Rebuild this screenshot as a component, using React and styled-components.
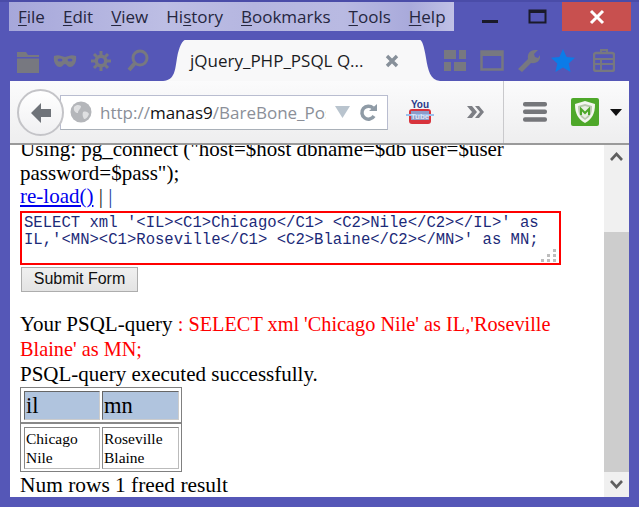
import React from "react";
import styled, { createGlobalStyle } from "styled-components";

const Global = createGlobalStyle`
  html, body { margin: 0; padding: 0; background: #5557b7; }
  body { width: 639px; height: 507px; overflow: hidden; }
`;
const Win = styled.div`
  width: 639px; height: 507px; background: #5557b7; display: flex; flex-direction: column;
  border-top: 2px solid #4a4ca8; box-sizing: border-box; overflow: hidden;
`;
const TitleBar = styled.div`
  height: 29px; display: flex; align-items: flex-start; padding-left: 9px;
`;
const MenuBar = styled.div`
  width: 445px; height: 29px; display: flex; align-items: center; padding-left: 9px; gap: 18px; box-sizing: border-box;
  background: linear-gradient(90deg, #a6a7da 0%, #bdbee4 35%, #b5b6e0 55%, #b9bae2 75%, #a9aadb 90%, #c0c1e6 100%);
  font: 17px "Open Sans", "Noto Sans", sans-serif; color: #25263f;
`;
const MenuItem = styled.span`
  white-space: nowrap;
  u { text-underline-offset: 2px; text-decoration-thickness: 1px; }
`;
const Controls = styled.div`
  margin-left: auto; margin-right: 8px; display: flex; align-items: center;
`;
const Ctl = styled.div`
  width: ${p => p.$w}px; height: 29px; display: flex; align-items: center; justify-content: center;
  background: ${p => p.$bg || "transparent"};
`;
const TabRow = styled.div`
  height: 50px; display: flex; align-items: flex-end; padding-left: 10px;
`;
const LeftIcons = styled.div`
  width: 153px; height: 41px; display: flex; align-items: center; padding: 0 0 0 6px; gap: 13px; box-sizing: border-box;
`;
const Tab = styled.div`
  height: 41px; width: 235px; background: #f8f8f9; display: flex; align-items: center; justify-content: space-between;
  padding: 0 21px 0 5px; box-sizing: border-box;
  font: 17px "Open Sans", "Noto Sans", sans-serif; color: #1b1b1f; white-space: nowrap;
`;
const Flank = styled.svg`
  display: block; flex: none;
`;
const RightIcons = styled.div`
  display: flex; align-items: center; height: 41px; gap: 14px; padding-left: 4px;
`;
const Toolbar = styled.div`
  margin-left: 10px; width: 619px; height: 64px; flex: none; position: relative; display: flex; align-items: center;
  background: linear-gradient(#fbfbfc, #eeeeef);
  border-bottom: 2px solid #9a9a9a; box-sizing: border-box;
`;
const BackBtn = styled.div`
  position: absolute; left: 7px; top: 8px; width: 47px; height: 47px; border-radius: 50%; box-sizing: border-box;
  border: 2px solid #c4c4c8; background: linear-gradient(#fff, #f0f0f2); display: flex; align-items: center; justify-content: center;
`;
const UrlBox = styled.div`
  margin-left: 50px; width: 328px; height: 35px; box-sizing: border-box; background: #fff;
  border: 1px solid #b9bdd0; border-bottom-color: #a9b0b8; display: flex; align-items: center; padding-left: 9px; gap: 8px;
`;
const UrlText = styled.div`
  width: 226px; overflow: hidden; white-space: nowrap; font: 17px "Open Sans", "Noto Sans", sans-serif; color: #8b8f98;
  b { font-weight: 400; color: #111; }
`;
const ToolIcons = styled.div`
  display: flex; align-items: center;
`;
const Divider = styled.div`
  width: 1px; height: 62px; background: #c9c9cc;
`;
const Viewport = styled.div`
  margin-left: 10px; width: 619px; flex: 1; min-height: 0; display: flex; overflow: hidden;
`;
const Page = styled.div`
  flex: 1; min-width: 0; background: #fff; padding-left: 10px; overflow: hidden;
  font: 21px/23.5px "Liberation Serif", serif; color: #000;
`;
const TopBlock = styled.div`
  margin-top: -7px; width: 520px;
`;
const Link = styled.a`
  color: #0000ee; text-decoration: underline;
`;
const Bar = styled.span`
  color: ${p => (p.$blue ? "#1f3f9f" : "#222")};
`;
const Sql = styled.div`
  margin-top: 2px; width: 541px; height: 54px; box-sizing: border-box; border: 2px solid #ff0000; padding: 2px 2px; position: relative;
  font: 15.6px/17.5px "Liberation Mono", monospace; color: #1c2a78; white-space: pre;
`;
const Grip = styled.svg`
  position: absolute; right: 0; bottom: 0;
`;
const Submit = styled.button`
  display: block; margin: 2px 0 0 1px; width: 117px; height: 25px; padding: 0; box-sizing: border-box;
  background: linear-gradient(#f0f0f0, #e3e3e3); border: 1px solid #adadad;
  font: 16px "Liberation Sans", sans-serif; color: #111;
`;
const Result = styled.div`
  margin-top: 20px; width: 560px; line-height: 25px;
`;
const Red = styled.span` color: #ff0000; font-size: 20.3px; `;
const Grid = styled.div`
  width: 162px; box-sizing: border-box; border: 1px solid #808080; margin-top: 0;
`;
const GridRow = styled.div`
  display: grid; grid-template-columns: 76px 77px; gap: 2px; padding: 3px 3px 2px;
  border-bottom: ${p => (p.$head ? "2px solid #888" : "none")};
`;
const Th = styled.div`
  height: 29px; background: #b0c4de; border: 1px solid; border-color: #666 #ccc #ccc #666; box-sizing: border-box;
  font: 22.5px/27px "Liberation Serif", serif; padding-left: 1px;
`;
const Td = styled.div`
  height: 42px; border: 1px solid; border-color: #888 #bbb #bbb #888; box-sizing: border-box;
  font: 15.5px/19px "Liberation Serif", serif; padding: 1px 0 0 1px;
`;
const Footer = styled.div`
  font-size: 21.4px; line-height: 24px; margin-top: 1px; white-space: nowrap;
`;
const ScrollBar = styled.div`
  width: 25px; flex: none; background: #f0f0f0; display: flex; flex-direction: column; align-items: stretch;
`;
const ScrollBtn = styled.div`
  height: 87px; display: flex; justify-content: center; padding-top: 7px; box-sizing: border-box;
`;
const ScrollEnd = styled.div`
  height: 25px; display: flex; justify-content: center; align-items: center;
`;
const Thumb = styled.div`
  height: 240px; background: #cdcdcd;
`;
const BottomEdge = styled.div`
  height: 10px; flex: none; background: #5557b7;
`;
const IconLabel = styled.text`
  font: bold ${p => p.$size}px "Liberation Sans", sans-serif; fill: ${p => p.$fill};
`;

const G = "#777880";
const I = ({ w = 26, h = 26, children, style }) => (
  <svg width={w} height={h} viewBox={`0 0 ${w} ${h}`} style={style}>{children}</svg>
);

const menu = [["F", "ile"], ["E", "dit"], ["V", "iew"], ["Hi", "s", "tory"], ["B", "ookmarks"], ["T", "ools"], ["H", "elp"]];

export default function App() {
  return (
    <Win>
      <Global />
      <TitleBar>
        <MenuBar>
          {menu.map((m, i) => (
            <MenuItem key={i}>
              {m.length === 3 ? <>{m[0]}<u>{m[1]}</u>{m[2]}</> : <><u>{m[0]}</u>{m[1]}</>}
            </MenuItem>
          ))}
        </MenuBar>
        <Controls>
          <Ctl $w={48}><I w={18} h={18}><rect x="1" y="12" width="16" height="3" fill="#1a1a2a" /></I></Ctl>
          <Ctl $w={48}><I w={20} h={16}><rect x="1.5" y="1.5" width="16" height="12" fill="none" stroke="#1a1a2a" strokeWidth="2" /><rect x="1" y="1" width="17" height="3" fill="#1a1a2a" /></I></Ctl>
          <Ctl $w={69} $bg="#c8504f"><I w={16} h={16}><path d="M2 2 14 14M14 2 2 14" stroke="#fff" strokeWidth="3" /></I></Ctl>
        </Controls>
      </TitleBar>
      <TabRow>
        <LeftIcons>
          <I w={24} h={24}><path d="M1 3h9l2 3h11v18H1z" fill={G} /><rect x="1" y="8" width="22" height="1.5" fill="#5557b7" /></I>
          <I w={24} h={14}><path d="M1 2c5-2 7 0 11 1 4-1 6-3 11-1 1 6-2 11-6 11-3 0-3-3-5-3s-2 3-5 3C3 13 0 8 1 2z" fill={G} /><ellipse cx="7" cy="6" rx="2.5" ry="1.5" fill="#5557b7" /><ellipse cx="17" cy="6" rx="2.5" ry="1.5" fill="#5557b7" /></I>
          <I w={22} h={22}><g stroke={G} strokeWidth="3"><path d="M11 1v20M1 11h20M4 4l14 14M18 4 4 18" /></g><circle cx="11" cy="11" r="6.5" fill={G} /><circle cx="11" cy="11" r="3" fill="#5557b7" /></I>
          <I w={22} h={24} style={{ marginLeft: 2 }}><circle cx="13" cy="9" r="7" fill="none" stroke={G} strokeWidth="3" /><path d="M8 14 2 21" stroke={G} strokeWidth="4" /></I>
        </LeftIcons>
        <Flank width="22" height="41" viewBox="0 0 22 41"><path d="M0 41C12 40 12 30 14 18 16 6 20 0 22 0V41Z" fill="#f8f8f9" /></Flank>
        <Tab>
          <span>jQuery_PHP_PSQL Q...</span>
          <I w={14} h={14}><path d="M2 2 12 12M12 2 2 12" stroke="#87909a" strokeWidth="3.4" /></I>
        </Tab>
        <Flank width="20" height="41" viewBox="0 0 20 41"><path d="M20 41C10 40 8 30 6 18 4 6 2 0 0 0V41Z" fill="#f8f8f9" /></Flank>
        <RightIcons>
          <I w={22} h={21}><path d="M0 0h12v9H0zM15 0h7v9h-7zM0 12h7v9H0zM10 12h12v9H10z" fill={G} /></I>
          <I w={24} h={21}><rect x="1.5" y="1.5" width="21" height="18" fill="none" stroke={G} strokeWidth="2.5" /><rect x="1" y="1" width="22" height="5" fill={G} /></I>
          <I w={23} h={23} style={{ marginLeft: -1 }}><path d="M1 20 11 10C10 5 13 1 18 1l3 0-4 4 1 3 3 1 2-3c1 5-3 9-9 8L5 23z" fill={G} /></I>
          <I w={24} h={23} style={{ marginLeft: -3 }}><path d="M12 0l3.6 8 8.4.8-6.3 5.6 1.9 8.6L12 18.5 4.4 23l1.9-8.6L0 8.8 8.4 8z" fill="#0b7ce8" /></I>
          <I w={22} h={23} style={{ marginLeft: 4 }}><rect x="1" y="4" width="20" height="18" rx="2" fill="none" stroke={G} strokeWidth="2.4" /><path d="M8 4V1h6v3M1 10h20M1 15h20M8 10v12" stroke={G} strokeWidth="2" fill="none" /></I>
        </RightIcons>
      </TabRow>
      <Toolbar>
        <BackBtn>
          <I w={24} h={22}><path d="M12 1 2 11l10 10v-6h10V7H12z" fill="#6f7379" /></I>
        </BackBtn>
        <UrlBox>
          <I w={22} h={22} style={{ flex: "none" }}><circle cx="11" cy="11" r="10.5" fill="#b4b6ba" /><path d="M4 6c3-3 5-2 7-1 0 3-3 4-3 7-2 0-5-2-4-6zM13 11c3-1 5 0 6 2-1 3-3 5-5 5-1-2-2-4-1-7z" fill="#dfe0e2" /></I>
          <UrlText>http://<b>manas9</b>/BareBone_PostgreSQL</UrlText>
          <I w={18} h={14} style={{ flex: "none" }}><path d="M1 1h15L8.5 13z" fill="#b9c4ce" /></I>
          <I w={19} h={19} style={{ flex: "none", marginLeft: -1 }}><path d="M15 13a6.5 6.5 0 1 1-1-8" fill="none" stroke="#8f9ba6" strokeWidth="3.5" /><path d="M10 8h8V1z" fill="#8f9ba6" /></I>
        </UrlBox>
        <ToolIcons>
          <I w={28} h={26} style={{ marginLeft: 18 }}>
            <rect x="3" y="10" width="22" height="15" rx="3" fill="#d8333c" />
            <rect x="5" y="12" width="18" height="9" fill="#8d9cc8" />
            <path d="M0 16h28" stroke="#9cc0ee" strokeWidth="2" />
            <IconLabel x="14" y="9" textAnchor="middle" $size={10} $fill="#2a3a8a">You</IconLabel>
            <IconLabel x="14" y="20" textAnchor="middle" $size={8} $fill="#dfe4f2">Tube</IconLabel>
          </I>
          <I w={18} h={14} style={{ marginLeft: 32 }}><path d="M1 1h5l5 6-5 6H1l5-6zM9 1h4l5 6-5 6H9l5-6z" fill="#7d7f85" /></I>
          <Divider style={{ marginLeft: 19 }} />
          <I w={24} h={20} style={{ marginLeft: 19 }}><rect width="24" height="4.5" rx="2" fill="#75767a" /><rect y="7.6" width="24" height="4.5" rx="2" fill="#75767a" /><rect y="15.2" width="24" height="4.5" rx="2" fill="#75767a" /></I>
          <I w={28} h={28} style={{ marginLeft: 24 }}>
            <rect width="28" height="28" rx="2" fill="#4ea82a" />
            <path d="M14 3 24 6c0 10-3 15-10 19C7 21 4 16 4 6z" fill="#f3f6ee" />
            <path d="M14 6 21 8c0 8-2 11-7 14-5-3-7-6-7-14z" fill="#b9c9ae" />
            <path d="M14 8 19 9.5c0 6-2 8.5-5 10.5-3-2-5-4.5-5-10.5z" fill="#e9efe2" />
            <path d="M10 17v-6l4 4 4-4v6" fill="none" stroke="#4ea82a" strokeWidth="2" />
          </I>
          <I w={12} h={7} style={{ marginLeft: 11 }}><path d="M0 0h12L6 7z" fill="#111" /></I>
        </ToolIcons>
      </Toolbar>
      <Viewport>
        <Page>
          <TopBlock>
            Using: pg_connect ("host=$host dbname=$db user=$user password=$pass");<br />
            <Link>re-load()</Link> <Bar>|</Bar> <Bar $blue>|</Bar>
          </TopBlock>
          <Sql>
            {"SELECT xml '<IL><C1>Chicago</C1> <C2>Nile</C2></IL>' as\nIL,'<MN><C1>Roseville</C1> <C2>Blaine</C2></MN>' as MN;"}
            <Grip width="19" height="15" viewBox="0 0 19 15">
              <g fill="#bdbdbd"><rect x="13" y="1" width="3" height="3" /><rect x="7" y="6" width="3" height="3" /><rect x="13" y="6" width="3" height="3" /><rect x="1" y="11" width="3" height="3" /><rect x="7" y="11" width="3" height="3" /><rect x="13" y="11" width="3" height="3" /></g>
            </Grip>
          </Sql>
          <Submit>Submit Form</Submit>
          <Result>
            Your PSQL-query <Red>: SELECT xml 'Chicago Nile' as IL,'Roseville Blaine' as MN;</Red><br />
            PSQL-query executed successfully.
          </Result>
          <Grid>
            <GridRow $head><Th>il</Th><Th>mn</Th></GridRow>
            <GridRow><Td>Chicago Nile</Td><Td>Roseville Blaine</Td></GridRow>
          </Grid>
          <Footer>Num rows 1 freed result</Footer>
        </Page>
        <ScrollBar>
          <ScrollBtn><I w={13} h={9}><path d="M1 8l5.5-6L12 8" fill="none" stroke="#5f5f5f" strokeWidth="2.6" /></I></ScrollBtn>
          <Thumb />
          <ScrollEnd><I w={13} h={9}><path d="M1 1l5.5 6L12 1" fill="none" stroke="#5f5f5f" strokeWidth="2.6" /></I></ScrollEnd>
        </ScrollBar>
      </Viewport>
      <BottomEdge />
    </Win>
  );
}
